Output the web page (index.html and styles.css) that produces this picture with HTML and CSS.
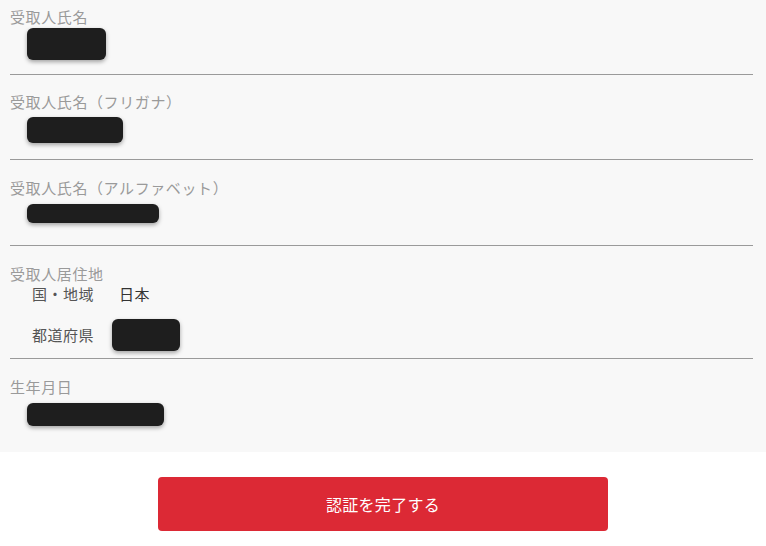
FILE: index.html
```html
<!DOCTYPE html>
<html lang="ja">
<head>
<meta charset="utf-8">
<link rel="stylesheet" href="styles.css">
</head>
<body>
<div class="panel">
  <section class="sec sec1">
    <div class="label">受取人氏名</div>
    <div class="mask m1"></div>
  </section>
  <section class="sec sec2">
    <div class="label">受取人氏名（フリガナ）</div>
    <div class="mask m2"></div>
  </section>
  <section class="sec sec3">
    <div class="label">受取人氏名（アルファベット）</div>
    <div class="mask m3"></div>
  </section>
  <section class="sec sec4">
    <div class="label">受取人居住地</div>
    <div class="row row1"><span class="key">国・地域</span><span class="val">日本</span></div>
    <div class="row row2"><span class="key">都道府県</span><div class="mask m4"></div></div>
  </section>
  <section class="sec sec5 last">
    <div class="label">生年月日</div>
    <div class="mask m5"></div>
  </section>
</div>
<div class="actions">
  <button class="submit">認証を完了する</button>
</div>
</body>
</html>
```
FILE: styles.css
```css
* { box-sizing: border-box; }
html, body { margin: 0; padding: 0; background: #fff; }
body { font-family: "Noto Sans CJK JP", "Noto Sans", sans-serif; }
.panel { background: #f8f8f8; padding: 0 13px 0 10px; }
.sec { border-bottom: 1px solid #9a9a9a; display: flex; flex-direction: column; align-items: flex-start; }
.sec.last { border-bottom: none; }
.label { font-size: 15px; line-height: 20px; color: #9a9a9a; height: 20px; letter-spacing: 0.6px; }
.mask { background: #1e1e1e; border-radius: 6px; box-shadow: 0 2px 4px rgba(0,0,0,0.35); margin-left: 17px; }
.sec1 { padding: 7px 0 14px; }
.m1 { width: 79px; height: 32px; margin-top: 1px; }
.sec2 { padding: 17px 0 16px; }
.m2 { width: 96px; height: 26px; margin-top: 5px; }
.sec3 { padding: 18px 0 22px; }
.m3 { width: 132px; height: 19px; margin-top: 6px; }
.sec4 { padding: 18px 0 7px; }
.row { display: flex; align-items: center; margin-left: 22px; font-size: 15px; line-height: 20px; letter-spacing: 0.5px; }
.row1 { height: 20px; }
.row2 { height: 32px; margin-top: 15px; }
.key { color: #555; width: 64px; white-space: nowrap; }
.row1 .val { color: #333; margin-left: 23px; }
.m4 { width: 68px; height: 32px; margin-left: 16px; }
.sec5 { padding: 18px 0 26px; }
.m5 { width: 137px; height: 23px; margin-top: 6px; }
.actions { display: flex; justify-content: center; padding-top: 25px; }
.submit { width: 450px; height: 54px; background: #dc2935; color: #fff; border: none; border-radius: 4px; font-family: "Noto Sans CJK JP", sans-serif; font-size: 16px; font-weight: 400; letter-spacing: 0.3px; }
```
